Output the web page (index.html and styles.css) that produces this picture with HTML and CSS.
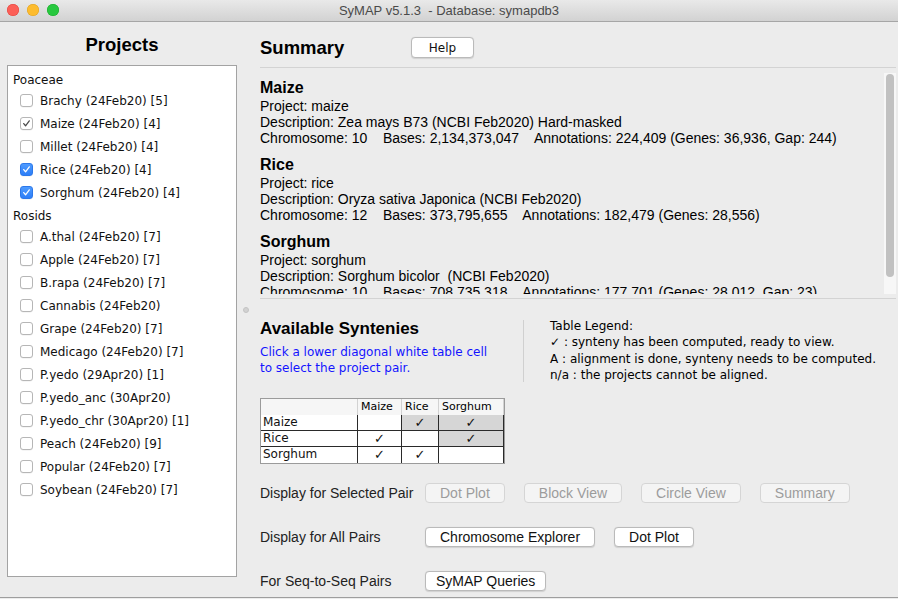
FILE: index.html
```html
<!DOCTYPE html>
<html>
<head>
<meta charset="utf-8">
<link rel="stylesheet" href="styles.css">
</head>
<body>
<div class="titlebar">
  <div class="lights">
    <span class="light red"></span><span class="light yellow"></span><span class="light green"></span>
  </div>
  <div class="wtitle">SyMAP v5.1.3&nbsp; - Database: symapdb3</div>
  <div></div>
</div>
<div class="main">
  <div class="left">
    <div class="proj-title">Projects</div>
    <div class="proj-box">
      <div class="group">Poaceae</div>
      <div class="item"><span class="cb"></span>Brachy (24Feb20) [5]</div>
      <div class="item"><span class="cb grey"><svg viewBox="0 0 13 13"><path d="M3.2 6.6 L5.4 9.2 L9.8 3.4" /></svg></span>Maize (24Feb20) [4]</div>
      <div class="item"><span class="cb"></span>Millet (24Feb20) [4]</div>
      <div class="item"><span class="cb on"><svg viewBox="0 0 13 13"><path d="M3.2 6.6 L5.4 9.2 L9.8 3.4" /></svg></span>Rice (24Feb20) [4]</div>
      <div class="item"><span class="cb on"><svg viewBox="0 0 13 13"><path d="M3.2 6.6 L5.4 9.2 L9.8 3.4" /></svg></span>Sorghum (24Feb20) [4]</div>
      <div class="group g2">Rosids</div>
      <div class="item"><span class="cb"></span>A.thal (24Feb20) [7]</div>
      <div class="item"><span class="cb"></span>Apple (24Feb20) [7]</div>
      <div class="item"><span class="cb"></span>B.rapa (24Feb20) [7]</div>
      <div class="item"><span class="cb"></span>Cannabis (24Feb20)</div>
      <div class="item"><span class="cb"></span>Grape (24Feb20) [7]</div>
      <div class="item"><span class="cb"></span>Medicago (24Feb20) [7]</div>
      <div class="item"><span class="cb"></span>P.yedo (29Apr20) [1]</div>
      <div class="item"><span class="cb"></span>P.yedo_anc (30Apr20)</div>
      <div class="item"><span class="cb"></span>P.yedo_chr (30Apr20) [1]</div>
      <div class="item"><span class="cb"></span>Peach (24Feb20) [9]</div>
      <div class="item"><span class="cb"></span>Popular (24Feb20) [7]</div>
      <div class="item"><span class="cb"></span>Soybean (24Feb20) [7]</div>
    </div>
  </div>
  <div class="right">
    <span class="knob"></span>
    <div class="sum-head">
      <h2 class="sum-title">Summary</h2>
      <button class="btn help">Help</button>
    </div>
    <div class="sum-area">
      <div class="sum-text">
        <div class="sp-name">Maize</div>
        <div class="sp-line">Project: maize</div>
        <div class="sp-line">Description: Zea mays B73 (NCBI Feb2020) Hard-masked</div>
        <div class="sp-line">Chromosome: 10    Bases: 2,134,373,047    Annotations: 224,409 (Genes: 36,936, Gap: 244)</div>
        <div class="sp-name">Rice</div>
        <div class="sp-line">Project: rice</div>
        <div class="sp-line">Description: Oryza sativa Japonica (NCBI Feb2020)</div>
        <div class="sp-line">Chromosome: 12    Bases: 373,795,655    Annotations: 182,479 (Genes: 28,556)</div>
        <div class="sp-name">Sorghum</div>
        <div class="sp-line">Project: sorghum</div>
        <div class="sp-line">Description: Sorghum bicolor  (NCBI Feb2020)</div>
        <div class="sp-line">Chromosome: 10    Bases: 708,735,318    Annotations: 177,701 (Genes: 28,012, Gap: 23)</div>
      </div>
      <div class="scroll"><div class="thumb"></div></div>
    </div>
    <div class="avail">
      <div class="avail-left">
        <h3 class="avail-title">Available Syntenies</h3>
        <div class="hint">Click a lower diagonal white table cell<br>to select the project pair.</div>
        <div class="tbl">
          <div class="th"></div><div class="th">Maize</div><div class="th">Rice</div><div class="th last">Sorghum</div>
          <div class="td rh">Maize</div><div class="td"></div><div class="td up">✓</div><div class="td up">✓</div>
          <div class="td rh">Rice</div><div class="td">✓</div><div class="td"></div><div class="td up">✓</div>
          <div class="td rh lr">Sorghum</div><div class="td lr">✓</div><div class="td lr">✓</div><div class="td lr"></div>
        </div>
      </div>
      <div class="vsep"></div>
      <div class="legend">
        <div>Table Legend:</div>
        <div><b class="chk">✓</b> : synteny has been computed, ready to view.</div>
        <div>A : alignment is done, synteny needs to be computed.</div>
        <div>n/a : the projects cannot be aligned.</div>
      </div>
    </div>
    <div class="actions">
      <div class="arow">
        <span class="alabel">Display for Selected Pair</span>
        <button class="btn dis">Dot Plot</button>
        <button class="btn dis">Block View</button>
        <button class="btn dis">Circle View</button>
        <button class="btn dis">Summary</button>
      </div>
      <div class="arow">
        <span class="alabel">Display for All Pairs</span>
        <button class="btn">Chromosome Explorer</button>
        <button class="btn">Dot Plot</button>
      </div>
      <div class="arow">
        <span class="alabel">For Seq-to-Seq Pairs</span>
        <button class="btn slim">SyMAP Queries</button>
      </div>
    </div>
  </div>
</div>
</body>
</html>
```
FILE: styles.css
```css
* { box-sizing: border-box; margin: 0; padding: 0; }
html, body { width: 898px; height: 599px; overflow: hidden; }
body {
  background: #ececec;
  font-family: "Liberation Sans", Arial, sans-serif;
  color: #000;
}

/* title bar */
.titlebar {
  height: 22px;
  display: grid;
  grid-template-columns: 1fr auto 1fr;
  align-items: center;
  background: linear-gradient(#e9e9e9, #d2d2d2);
  border-bottom: 1px solid #a6a6a6;
}
.lights { display: flex; gap: 8px; padding-left: 7px; padding-bottom: 1px; }
.light { width: 12px; height: 12px; border-radius: 50%; display: block; }
.red { background: #fc5f57; box-shadow: inset 0 0 0 0.5px #e0443e; }
.yellow { background: #fdbc2e; box-shadow: inset 0 0 0 0.5px #dea123; }
.green { background: #28c83f; box-shadow: inset 0 0 0 0.5px #1aab29; }
.wtitle { font-size: 13px; color: #4a4a4a; padding-bottom: 1px; }

/* main */
.main {
  height: 576px;
  display: flex;
  border-bottom: 1px solid #9e9e9e;
}
.left { width: 243px; padding: 11px 0 0 7px; }
.proj-title {
  width: 230px;
  height: 24px;
  line-height: 24px;
  text-align: center;
  font-size: 18.5px;
  font-weight: bold;
  margin-bottom: 8px;
}
.proj-box {
  width: 230px;
  height: 512px;
  background: #fff;
  border: 1px solid #a3a3a3;
  padding-top: 6px;
  font-family: "DejaVu Sans", sans-serif;
  font-size: 12px;
  color: #111;
}
.group { height: 17px; line-height: 17px; padding-left: 5px; }
.group.g2 { margin-top: 4px; }
.item { height: 23px; display: flex; align-items: center; padding-left: 12px; }
.cb {
  width: 13px; height: 13px;
  border: 1px solid #b6b6b6;
  border-radius: 3px;
  background: #fff;
  margin-right: 7px;
  display: flex;
  box-shadow: 0 0.5px 0.5px rgba(0,0,0,0.08);
}
.cb svg { width: 11px; height: 11px; }
.cb path { fill: none; stroke-width: 1.5; stroke-linecap: round; stroke-linejoin: round; }
.cb.grey path { stroke: #4a4a4a; }
.cb.on { background: linear-gradient(#4e9bff, #2d7ef7); border-color: #2c78ea; }
.cb.on path { stroke: #fff; }

/* right */
.right {
  flex: 1;
  position: relative;
  padding: 0 2px 0 17px;
  display: flex;
  flex-direction: column;
}
.knob {
  position: absolute;
  left: 0; top: 285px;
  width: 6px; height: 6px;
  border-radius: 50%;
  background: #d2d2d2;
  border: 1px solid #c4c4c4;
}
.sum-head { height: 45px; display: flex; align-items: center; padding-top: 6px; }
.sum-title { width: 151px; font-size: 18.5px; font-weight: bold; }
.btn {
  height: 20px;
  padding: 0 14px;
  background: #fff;
  border: 1px solid #bababa;
  border-radius: 4px;
  font-family: "Liberation Sans", Arial, sans-serif;
  font-size: 14px;
  color: #111;
  box-shadow: 0 0.5px 1px rgba(0,0,0,0.12);
}
.btn.slim { padding: 0 10px; }
.btn.help {
  width: 63px; height: 21px;
  padding: 0;
  font-family: "DejaVu Sans", sans-serif;
  font-size: 12px;
}
.btn.dis { background: #f4f4f4; border-color: #d5d5d5; color: #9c9c9c; box-shadow: none; }

.sum-area {
  height: 232px;
  border-top: 1px solid #d3d3d3;
  border-bottom: 1px solid #d3d3d3;
  display: flex;
  overflow: hidden;
}
.sum-text { flex: 1; font-size: 14px; overflow: hidden; margin-bottom: 4px; }
.sp-name { font-size: 16px; font-weight: bold; height: 20px; line-height: 20px; margin-top: 9px; }
.sp-name:first-child { margin-top: 10px; }
.sp-line { height: 16px; line-height: 16px; white-space: pre; }
.scroll {
  width: 13px;
  margin: 5px 0 4px;
  background: #f7f7f7;
  border-left: 1px solid #ececec;
  padding: 1px 2px 0 2px;
}
.thumb { width: 8px; height: 203px; background: #c1c1c1; border-radius: 4px; }

.avail { display: flex; }
.avail-left { width: 263px; padding-top: 20px; }
.avail-title { font-size: 17px; font-weight: bold; height: 20px; line-height: 20px; }
.hint {
  margin-top: 5px;
  font-family: "DejaVu Sans", sans-serif;
  font-size: 12px;
  line-height: 16px;
  color: #1414ff;
}
.vsep { width: 1px; height: 62px; margin-top: 21px; background: #d0d0d0; }
.legend {
  padding: 19px 0 0 26px;
  font-family: "DejaVu Sans", sans-serif;
  font-size: 12px;
  line-height: 16.3px;
}
.chk { font-weight: bold; }

.tbl {
  margin-top: 22px;
  width: 245px;
  display: grid;
  grid-template-columns: 97px 44px 37px 65px;
  grid-template-rows: 16px 16px 16px 16px;
  border: 1px solid #9b9b9b;
  background: #fff;
  font-family: "DejaVu Sans", sans-serif;
}
.th {
  background: #f6f6f6;
  font-size: 11px;
  line-height: 16px;
  padding-left: 3px;
  border-right: 1px solid #d2d2d2;
  overflow: hidden;
}
.td {
  border-right: 1px solid #2a2a2a;
  border-bottom: 1px solid #2a2a2a;
  font-size: 13px;
  line-height: 15px;
  text-align: center;
  font-weight: bold;
  color: #111;
  overflow: hidden;
}
.td.lr { border-bottom: none; }
.td.rh { text-align: left; padding-left: 2px; font-weight: normal; font-size: 12px; }
.td.up { background: #d6d6d6; }

.actions { margin-top: 19px; display: flex; flex-direction: column; gap: 24px; }
.arow { display: flex; align-items: center; gap: 19px; height: 20px; }
.alabel { width: 146px; font-size: 14px; color: #222; white-space: nowrap; }
```
